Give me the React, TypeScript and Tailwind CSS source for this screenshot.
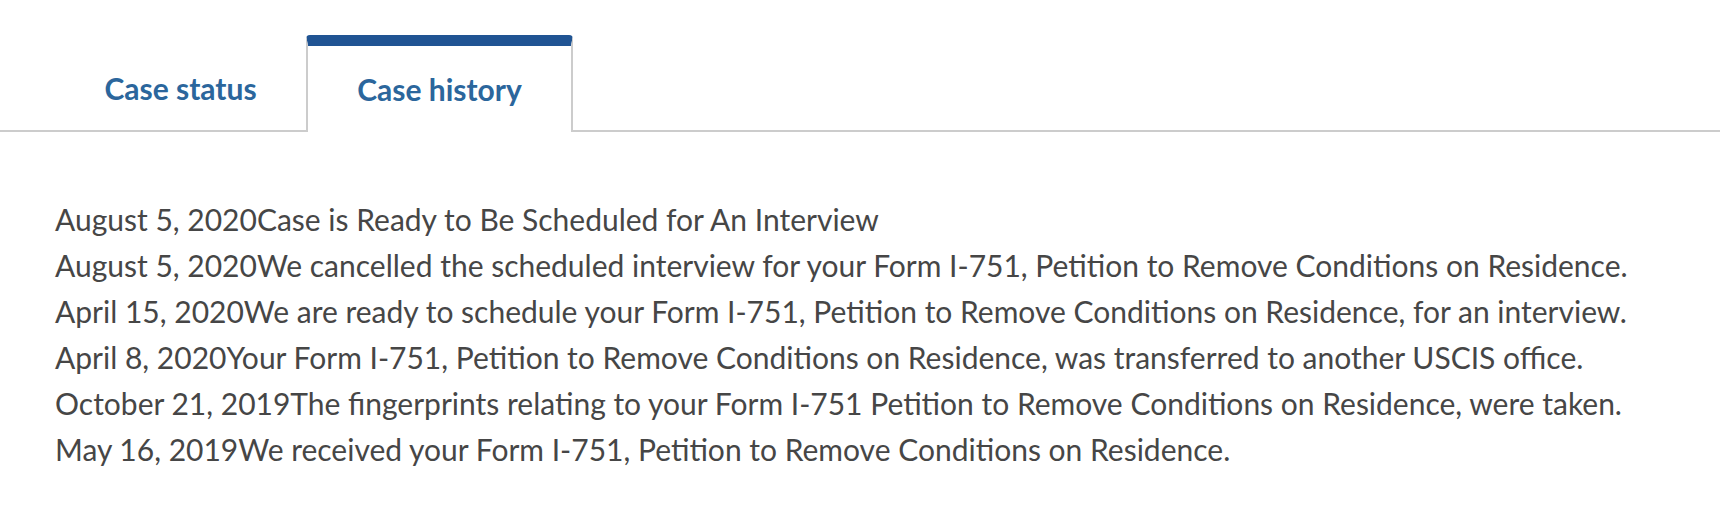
import React from "react";

const entries: [string, string][] = [
  ["August 5, 2020", "Case is Ready to Be Scheduled for An Interview"],
  ["August 5, 2020", "We cancelled the scheduled interview for your Form I-751, Petition to Remove Conditions on Residence."],
  ["April 15, 2020", "We are ready to schedule your Form I-751, Petition to Remove Conditions on Residence, for an interview."],
  ["April 8, 2020", "Your Form I-751, Petition to Remove Conditions on Residence, was transferred to another USCIS office."],
  ["October 21, 2019", "The fingerprints relating to your Form I-751 Petition to Remove Conditions on Residence, were taken."],
  ["May 16, 2019", "We received your Form I-751, Petition to Remove Conditions on Residence."],
];

export default function App() {
  return (
    <div className="w-[1720px] h-[516px] bg-white font-['Lato','Open_Sans',sans-serif]">
      <div className="pt-[35px] pl-[55px] flex border-b-2 border-[#cccccc]">
        <div className="w-[251px] h-[97px] -mb-[2px] border-2 border-transparent border-t-[11px] flex items-center justify-center text-[30px] font-bold text-[#2b669c]">
          Case status
        </div>
        <div className="w-[267px] h-[97px] -mb-[2px] bg-white border-x-2 border-[#cccccc] border-t-[11px] border-t-[#205493] rounded-t-[4px] flex items-center justify-center text-[30px] font-bold text-[#2b669c]">
          Case history
        </div>
      </div>
      <div className="pl-[55px] pt-[64px] text-[30px] leading-[46px] text-[#464646]">
        {entries.map(([d, t], i) => (
          <div key={i}>
            <span>{d}</span>
            <span>{t}</span>
          </div>
        ))}
      </div>
    </div>
  );
}
